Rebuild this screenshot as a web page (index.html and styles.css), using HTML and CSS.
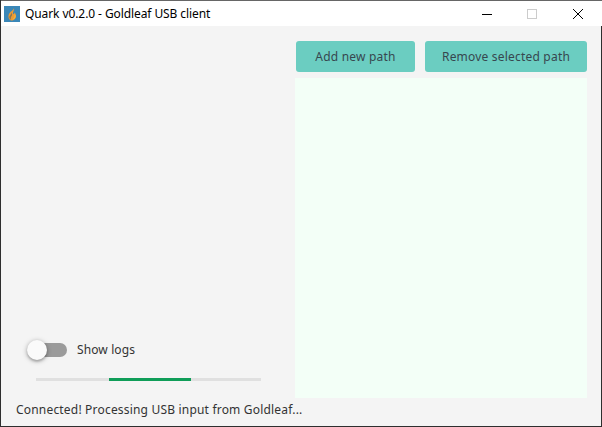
FILE: index.html
```html
<!DOCTYPE html>
<html lang="en">
<head>
<meta charset="utf-8">
<title>Quark v0.2.0 - Goldleaf USB client</title>
<link rel="stylesheet" href="styles.css">
</head>
<body>
<div class="window">
  <header class="titlebar">
    <svg class="app-icon" width="16" height="16" viewBox="0 0 16 16">
      <rect width="16" height="16" fill="#3a87b8"/>
      <path d="M10 1.500C10.500 3.500 6.500 5 5 8c-1.200 2.800-.2 5.500 2 6.500 2.800.2 5-2 5-4.500 0-1.500-.7-2.500-1.300-3.500C10.300 7.500 9.700 8 9 8 8.500 6 10.700 4 10 1.500z" fill="#eb9a34"/>
      <path d="M10.500 8c.5 2-.5 4.500-2.500 5.500 2 .5 3.700-1.500 3.700-3.500 0-.8-.5-1.500-1.200-2z" fill="#f3b23f"/>
      <path d="M7.500 6.500C7.800 8.300 5 9.500 5.500 12c.2.800.7 1.500 1.500 1.800C6.500 12 7 10.800 7.800 9.800c.5-1 .4-2.300-.3-3.300z" fill="#8c7650"/>
    </svg>
    <span class="title">Quark v0.2.0 - Goldleaf USB client</span>
    <div class="controls">
      <span class="ctl ctl-min"><svg width="10" height="10" viewBox="0 0 10 10"><path d="M0 5.500h10" stroke="#000" fill="none"/></svg></span>
      <span class="ctl"><svg width="10" height="10" viewBox="0 0 10 10"><rect x=".5" y=".5" width="9" height="9" stroke="#ccc" fill="none"/></svg></span>
      <span class="ctl"><svg width="10" height="10" viewBox="0 0 10 10"><path d="M0 0l10 10M10 0L0 10" stroke="#000" stroke-width="1" fill="none"/></svg></span>
    </div>
  </header>
  <main class="content">
    <section class="left">
      <label class="toggle-row">
        <span class="switch"><span class="knob"></span></span>
        <span class="label">Show logs</span>
      </label>
      <div class="progress"><div class="bar"></div></div>
    </section>
    <section class="right">
      <div class="buttons">
        <button class="btn btn-add">Add new path</button>
        <button class="btn btn-remove">Remove selected path</button>
      </div>
      <div class="list"></div>
    </section>
  </main>
  <footer class="status">Connected! Processing USB input from Goldleaf...</footer>
</div>
</body>
</html>
```
FILE: styles.css
```css
* { box-sizing: border-box; }
html, body { margin: 0; padding: 0; }
body { width: 602px; height: 427px; overflow: hidden; font-family: "Noto Sans", sans-serif; }
.window {
  width: 602px; height: 427px; display: flex; flex-direction: column;
  background: #f4f4f4; border: 1px solid #2e2e2e; border-top: 0;
}
.titlebar {
  height: 26px; flex: none; background: #fff; display: flex; align-items: center;
  margin-right: -1px; padding-left: 3px; border-top: 1px solid #666;
}
.app-icon { flex: none; margin-top: 1px; }
.title { margin-left: 5px; font-size: 12px; color: #000; white-space: nowrap; letter-spacing: -.09px; }
.controls { margin-left: auto; display: flex; margin-right: 1px; }
.ctl { width: 46px; height: 25px; display: flex; align-items: center; justify-content: center; }
.ctl-min { width: 44px; }
.content { flex: 1; display: flex; min-height: 0; }
.left { width: 294px; flex: none; display: flex; flex-direction: column; justify-content: flex-end; padding: 0 0 17px 35px; }
.toggle-row { display: flex; align-items: center; margin-left: -9px; }
.switch { position: relative; width: 36px; height: 14px; margin-left: 4px; background: #9b9b9b; border-radius: 7px; }
.knob {
  position: absolute; left: -4px; top: -3px; width: 20px; height: 20px; border-radius: 50%;
  background: #fafafa; box-shadow: 0 1px 5px rgba(0,0,0,.35), 0 2px 2px rgba(0,0,0,.14);
}
.label { margin-left: 10px; font-size: 12px; color: #333; letter-spacing: .11px; }
.progress { width: 225px; height: 3px; margin-top: 20px; background: #e0e0e0; position: relative; }
.bar { position: absolute; left: 73px; width: 82px; top: 0; bottom: 0; background: #0f9d58; }
.right { flex: 1; display: flex; flex-direction: column; padding-top: 15px; padding-right: 14px; }
.buttons { display: flex; gap: 10px; padding-left: 1px; }
.btn {
  height: 31px; border: 0; border-radius: 3px; background: #6bcdc1; color: #37474f; padding: 0;
  font-family: "Noto Sans", sans-serif; font-size: 12px; letter-spacing: .2px;
}
.btn-add { width: 119px; }
.btn-remove { width: 162px; }
.list { flex: 1; margin-top: 6px; background: #f3fff7; }
.status { height: 28px; flex: none; padding: 3px 0 0 15px; font-size: 12px; color: #333; letter-spacing: .19px; }
```
